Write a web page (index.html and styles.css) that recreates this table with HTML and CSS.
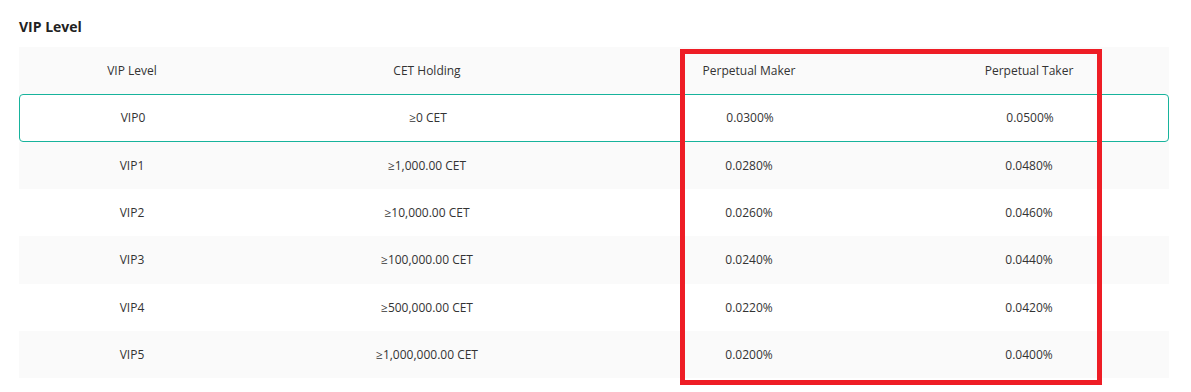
FILE: index.html
```html
<!DOCTYPE html>
<html lang="en">
<head>
<meta charset="utf-8">
<title>VIP Level</title>
<link rel="stylesheet" href="styles.css">
</head>
<body>
<div class="page">
  <h2 class="title">VIP Level</h2>
  <div class="table">
    <div class="row head">
      <div>VIP Level</div><div>CET Holding</div><div>Perpetual Maker</div><div>Perpetual Taker</div>
    </div>
    <div class="row current">
      <div>VIP0</div><div>≥0 CET</div><div>0.0300%</div><div>0.0500%</div>
    </div>
    <div class="row alt">
      <div>VIP1</div><div>≥1,000.00 CET</div><div>0.0280%</div><div>0.0480%</div>
    </div>
    <div class="row">
      <div>VIP2</div><div>≥10,000.00 CET</div><div>0.0260%</div><div>0.0460%</div>
    </div>
    <div class="row alt">
      <div>VIP3</div><div>≥100,000.00 CET</div><div>0.0240%</div><div>0.0440%</div>
    </div>
    <div class="row">
      <div>VIP4</div><div>≥500,000.00 CET</div><div>0.0220%</div><div>0.0420%</div>
    </div>
    <div class="row alt">
      <div>VIP5</div><div>≥1,000,000.00 CET</div><div>0.0200%</div><div>0.0400%</div>
    </div>
    <div class="highlight"></div>
  </div>
</div>
</body>
</html>
```
FILE: styles.css
```css
html, body {
  margin: 0;
  padding: 0;
  background: #ffffff;
}
body {
  font-family: "Open Sans", "Liberation Sans", sans-serif;
  color: #333333;
}
.page {
  padding: 17px 22px 16px 19px;
}
.title {
  margin: 0 0 10px 0;
  font-size: 14px;
  line-height: 20px;
  font-weight: 700;
  color: #222222;
}
.table {
  position: relative;
  width: 1150px;
}
.row {
  display: grid;
  grid-template-columns: 226px 364px 280px 280px;
  align-items: center;
  height: 47.33px;
  box-sizing: border-box;
  font-size: 12px;
  text-align: center;
}
.row.head {
  background: #fafafa;
  color: #333333;
}
.row.alt {
  background: #fafafa;
}
.row.current {
  border: 1px solid #17b39c;
  border-radius: 4px;
  background: #ffffff;
}
.highlight {
  position: absolute;
  left: 661px;
  top: 2px;
  width: 422px;
  height: 336px;
  box-sizing: border-box;
  border: 5px solid #ee1d25;
  pointer-events: none;
}
```
